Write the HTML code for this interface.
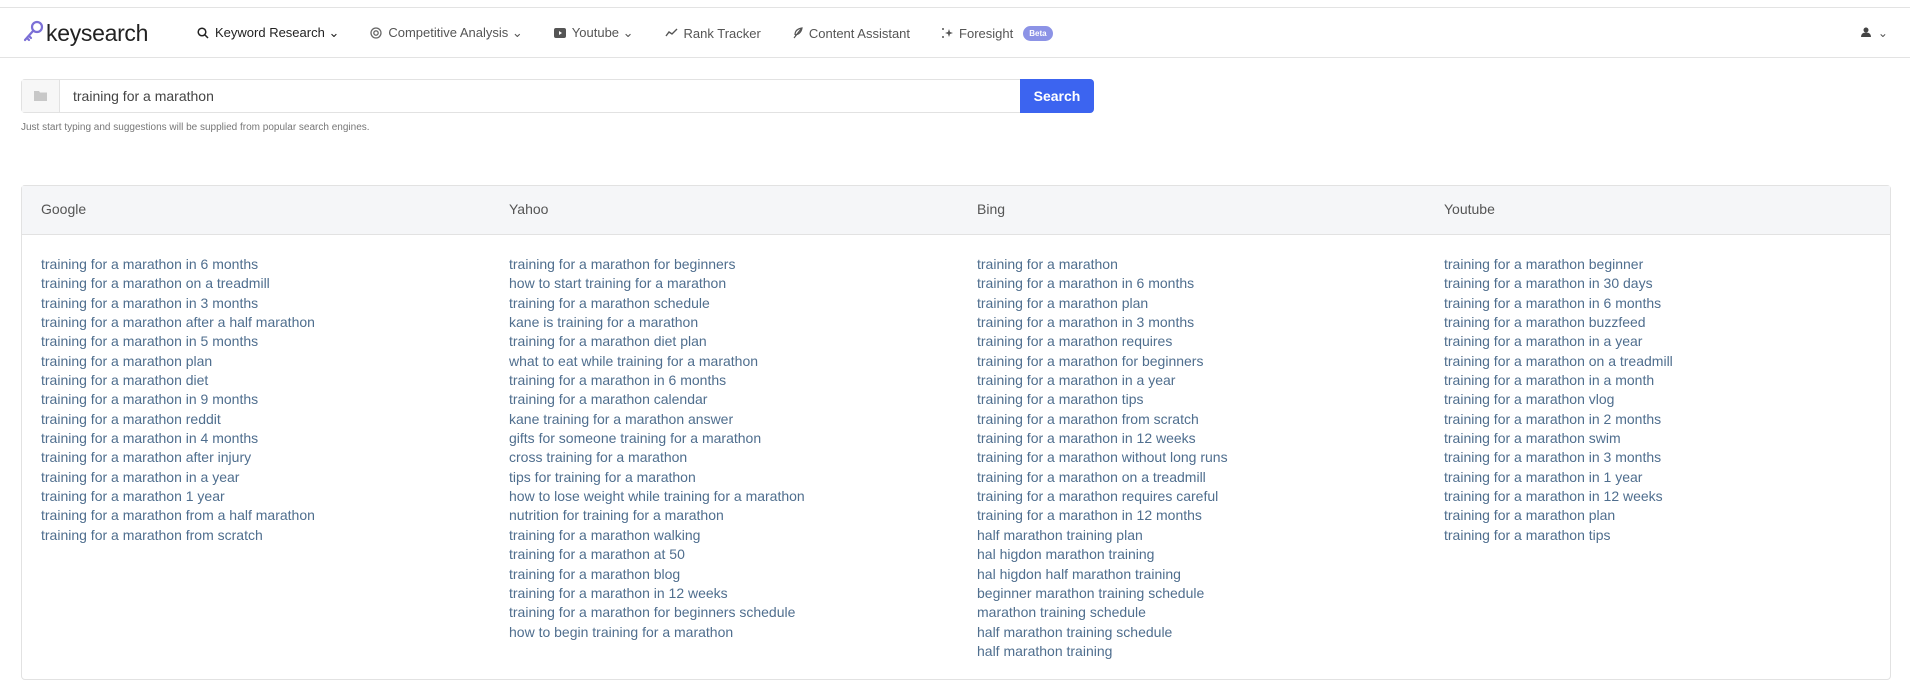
<!DOCTYPE html>
<html><head><meta charset="utf-8"><style>
*{box-sizing:border-box;margin:0;padding:0}
body{width:1910px;height:698px;background:#fff;font-family:"Liberation Sans",sans-serif;position:relative;overflow:hidden;color:#333}
.topline{position:absolute;top:7px;left:0;right:0;border-top:1px solid #e3e3e3}
.nav{position:absolute;top:8px;left:0;right:0;height:50px;border-bottom:1px solid #e3e3e3}
.logo{position:absolute;left:22px;top:12px;font-size:23px;color:#222;letter-spacing:-0.3px}
.logo svg{vertical-align:-3px;margin-right:2px}
.items{position:absolute;left:197px;top:17px;font-size:13px;color:#555;display:flex;gap:0}
.items span{margin-right:31px;display:flex;align-items:center;gap:6px;white-space:nowrap}
.items span.act{color:#222}
.beta{background:#8c93e6;color:#fff;font-size:8px;border-radius:8px;padding:3px 6px;margin-left:4px}
.user{position:absolute;right:22px;top:18px;font-size:12px;color:#555}
.search{position:absolute;left:21px;top:79px;width:1073px;height:34px;border:1px solid #e2e2e2;border-radius:4px}
.search .ico{position:absolute;left:0;top:0;width:38px;height:32px;border-right:1px solid #e2e2e2;background:#f7f7f7}
.search .txt{position:absolute;left:51px;top:8px;font-size:14px;color:#444}
.search .btn{position:absolute;right:-1px;top:-1px;width:74px;height:34px;background:#3c64f0;color:#fff;font-size:14px;font-weight:bold;text-align:center;line-height:34px;border-radius:0 4px 4px 0}
.help{position:absolute;left:21px;top:122px;font-size:10px;color:#777}
.card{position:absolute;left:21px;top:185px;width:1870px;height:495px;border:1px solid #e2e2e2;border-radius:4px}
.head{height:49px;background:#f5f6f8;border-bottom:1px solid #e2e2e2;position:relative}
.head div{position:absolute;top:15px;font-size:14px;color:#555}
.col{position:absolute;top:69px;font-size:14px;color:#4f6e8e;line-height:19.35px;white-space:nowrap}
</style></head><body>
<div class="topline"></div>
<div class="nav">
<div class="logo"><svg width="22" height="24" viewBox="0 0 22 24"><circle cx="15" cy="7" r="5" fill="none" stroke="#7b6fd6" stroke-width="2.2"/><path d="M11 11 L3 20 M5 18 L7 20 M7 16 L9 18" stroke="#7b6fd6" stroke-width="2.2" fill="none" stroke-linecap="round"/></svg>keysearch</div>
<div class="items">
<span class="act"><svg width="12" height="12" viewBox="0 0 12 12"><circle cx="5" cy="5" r="3.8" fill="none" stroke="#222" stroke-width="1.5"/><path d="M8 8 L11 11" stroke="#222" stroke-width="1.5"/></svg>Keyword Research ⌄</span>
<span><svg width="12" height="12" viewBox="0 0 12 12"><circle cx="6" cy="6" r="5" fill="none" stroke="#666" stroke-width="1.3"/><circle cx="6" cy="6" r="2.2" fill="none" stroke="#666" stroke-width="1.3"/></svg>Competitive Analysis ⌄</span>
<span><svg width="12" height="12" viewBox="0 0 12 12"><rect x="0" y="1" width="12" height="10" rx="2" fill="#555"/><path d="M5 4 L8 6 L5 8Z" fill="#fff"/></svg>Youtube ⌄</span>
<span><svg width="13" height="10" viewBox="0 0 13 10"><path d="M1 8 L4 4 L7 6 L12 1" stroke="#555" stroke-width="1.4" fill="none"/></svg>Rank Tracker</span>
<span><svg width="11" height="12" viewBox="0 0 11 12"><path d="M2 11 L9 2 M3 8 Q3 2 10 1 Q9 7 3 8" stroke="#555" stroke-width="1.2" fill="none"/></svg>Content Assistant</span>
<span><svg width="12" height="12" viewBox="0 0 12 12"><path d="M8 2 L9 5 L12 6 L9 7 L8 10 L7 7 L4 6 L7 5Z" fill="#555"/><circle cx="2" cy="2" r="1" fill="#555"/><circle cx="2" cy="10" r="1" fill="#555"/></svg>Foresight<b class="beta">Beta</b></span>
</div>
<div class="user"><svg width="10" height="10" viewBox="0 0 10 10"><circle cx="5" cy="3" r="2.5" fill="#444"/><path d="M0 10 Q0 5.5 5 5.5 Q10 5.5 10 10Z" fill="#444"/></svg>&nbsp;&nbsp;⌄</div>
</div>
<div class="search"><div class="ico"><svg style="position:absolute;left:12px;top:10px" width="15" height="12" viewBox="0 0 15 12"><path d="M0 1 H5 L6 2.5 H13 V11 H0Z" fill="#c8c8c8"/></svg></div><div class="txt">training for a marathon</div><div class="btn">Search</div></div>
<div class="help">Just start typing and suggestions will be supplied from popular search engines.</div>
<div class="card">
<div class="head"><div style="left:19px">Google</div><div style="left:487px">Yahoo</div><div style="left:955px">Bing</div><div style="left:1422px">Youtube</div></div>
<div class="col" style="left:19px">training for a marathon in 6 months<br>training for a marathon on a treadmill<br>training for a marathon in 3 months<br>training for a marathon after a half marathon<br>training for a marathon in 5 months<br>training for a marathon plan<br>training for a marathon diet<br>training for a marathon in 9 months<br>training for a marathon reddit<br>training for a marathon in 4 months<br>training for a marathon after injury<br>training for a marathon in a year<br>training for a marathon 1 year<br>training for a marathon from a half marathon<br>training for a marathon from scratch</div>
<div class="col" style="left:487px">training for a marathon for beginners<br>how to start training for a marathon<br>training for a marathon schedule<br>kane is training for a marathon<br>training for a marathon diet plan<br>what to eat while training for a marathon<br>training for a marathon in 6 months<br>training for a marathon calendar<br>kane training for a marathon answer<br>gifts for someone training for a marathon<br>cross training for a marathon<br>tips for training for a marathon<br>how to lose weight while training for a marathon<br>nutrition for training for a marathon<br>training for a marathon walking<br>training for a marathon at 50<br>training for a marathon blog<br>training for a marathon in 12 weeks<br>training for a marathon for beginners schedule<br>how to begin training for a marathon</div>
<div class="col" style="left:955px">training for a marathon<br>training for a marathon in 6 months<br>training for a marathon plan<br>training for a marathon in 3 months<br>training for a marathon requires<br>training for a marathon for beginners<br>training for a marathon in a year<br>training for a marathon tips<br>training for a marathon from scratch<br>training for a marathon in 12 weeks<br>training for a marathon without long runs<br>training for a marathon on a treadmill<br>training for a marathon requires careful<br>training for a marathon in 12 months<br>half marathon training plan<br>hal higdon marathon training<br>hal higdon half marathon training<br>beginner marathon training schedule<br>marathon training schedule<br>half marathon training schedule<br>half marathon training</div>
<div class="col" style="left:1422px">training for a marathon beginner<br>training for a marathon in 30 days<br>training for a marathon in 6 months<br>training for a marathon buzzfeed<br>training for a marathon in a year<br>training for a marathon on a treadmill<br>training for a marathon in a month<br>training for a marathon vlog<br>training for a marathon in 2 months<br>training for a marathon swim<br>training for a marathon in 3 months<br>training for a marathon in 1 year<br>training for a marathon in 12 weeks<br>training for a marathon plan<br>training for a marathon tips</div>
</div>
</body></html>
